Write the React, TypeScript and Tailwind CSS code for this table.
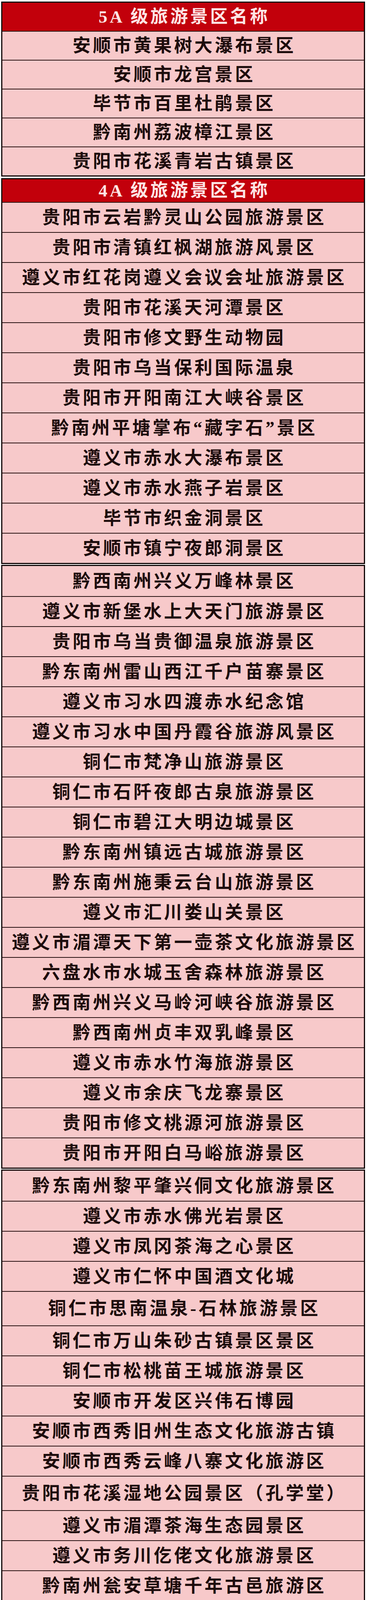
type Row = {
  name: string
  tall?: boolean
  size?: 'md' | 'sm'
}

const fiveA: Row[] = [
  { name: '安顺市黄果树大瀑布景区' },
  { name: '安顺市龙宫景区' },
  { name: '毕节市百里杜鹃景区' },
  { name: '黔南州荔波樟江景区' },
  { name: '贵阳市花溪青岩古镇景区' }
]

// 4A list is split in several stacked tables in the original picture
const fourAFirst: Row[] = [
  { name: '贵阳市云岩黔灵山公园旅游景区' },
  { name: '贵阳市清镇红枫湖旅游风景区' },
  { name: '遵义市红花岗遵义会议会址旅游景区' },
  { name: '贵阳市花溪天河潭景区' },
  { name: '贵阳市修文野生动物园' },
  { name: '贵阳市乌当保利国际温泉' },
  { name: '贵阳市开阳南江大峡谷景区' },
  { name: '黔南州平塘掌布“藏字石”景区' },
  { name: '遵义市赤水大瀑布景区' },
  { name: '遵义市赤水燕子岩景区' },
  { name: '毕节市织金洞景区' },
  { name: '安顺市镇宁夜郎洞景区' }
]

const fourAParts: Row[][] = [
  [
    { name: '黔西南州兴义万峰林景区' },
    { name: '遵义市新堡水上大天门旅游景区' },
    { name: '贵阳市乌当贵御温泉旅游景区' },
    { name: '黔东南州雷山西江千户苗寨景区' },
    { name: '遵义市习水四渡赤水纪念馆' },
    { name: '遵义市习水中国丹霞谷旅游风景区' },
    { name: '铜仁市梵净山旅游景区' },
    { name: '铜仁市石阡夜郎古泉旅游景区' },
    { name: '铜仁市碧江大明边城景区' },
    { name: '黔东南州镇远古城旅游景区' },
    { name: '黔东南州施秉云台山旅游景区' },
    { name: '遵义市汇川娄山关景区' },
    { name: '遵义市湄潭天下第一壶茶文化旅游景区' },
    { name: '六盘水市水城玉舍森林旅游景区' },
    { name: '黔西南州兴义马岭河峡谷旅游景区' },
    { name: '黔西南州贞丰双乳峰景区' },
    { name: '遵义市赤水竹海旅游景区' },
    { name: '遵义市余庆飞龙寨景区' },
    { name: '贵阳市修文桃源河旅游景区' },
    { name: '贵阳市开阳白马峪旅游景区' }
  ],
  [
    { name: '黔东南州黎平肇兴侗文化旅游景区' },
    { name: '遵义市赤水佛光岩景区' },
    { name: '遵义市凤冈茶海之心景区' },
    { name: '遵义市仁怀中国酒文化城' },
    { name: '铜仁市思南温泉-石林旅游景区', tall: true },
    { name: '铜仁市万山朱砂古镇景区景区' },
    { name: '铜仁市松桃苗王城旅游景区' },
    { name: '安顺市开发区兴伟石博园' },
    { name: '安顺市西秀旧州生态文化旅游古镇' },
    { name: '安顺市西秀云峰八寨文化旅游区' },
    { name: '贵阳市花溪湿地公园景区（孔学堂）', tall: true },
    { name: '遵义市湄潭茶海生态园景区' },
    { name: '遵义市务川仡佬文化旅游景区' },
    { name: '黔南州瓮安草塘千年古邑旅游区' },
    { name: '贵阳市息烽集中营革命历史纪念馆景区' },
    { name: '贵阳市白云蓬莱仙界·白云休闲农业旅游景区', size: 'sm' },
    { name: '贵阳市南明阿哈湖湿地公园景区' },
    { name: '铜仁市江口亚木沟生态旅游区' },
    { name: '安顺市紫云格凸河户外休闲旅游景区' },
    { name: '安顺市开发区贵州多彩万象旅游综合体' }
  ],
  [
    { name: '铜仁市石阡县佛顶山旅游景区' },
    { name: '铜仁市江口云舍旅游景区' },
    { name: '贵阳双龙多彩贵州城旅游综合体' },
    { name: '毕节市威宁草海生态旅游度假区' },
    { name: '黔东南州施秉杉木河景区' },
    { name: '贵阳市清镇时光贵州景区' },
    { name: '贵安新区车田景区' },
    { name: '安顺市平坝天龙屯堡旅游景区' },
    { name: '六盘水市盘县哒啦仙谷旅游景区' },
    { name: '六盘水市盘县妥乐古银杏旅游景区' },
    { name: '毕节市大方慕俄格古彝文化旅游景区' },
    { name: '遵义市赤水四洞沟旅游景区' },
    { name: '遵义市绥阳双河洞旅游景区' },
    { name: '遵义市仁怀茅台酒镇旅游景区' },
    { name: '黔东南州凯里云谷田园生态农业旅游综合体', size: 'md' },
    { name: '黔南州龙里中铁双龙镇巫山峡谷旅游景区', size: 'md' },
    { name: '黔南州福泉古城文化旅游景区' }
  ]
]

function NameRow({ row, first, short }: { row: Row; first?: boolean; short?: boolean }) {
  const height = short ? 'h-[74px]' : row.tall ? 'h-[88px]' : 'h-[77px]'
  const text =
    row.size === 'sm'
      ? 'text-[38px] tracking-[5px] pl-[5px]'
      : row.size === 'md'
        ? 'text-[44px] tracking-[4px] pl-[4px]'
        : 'text-[46px] tracking-[6px] pl-[6px]'

  return (
    <div
      className={`${height} ${first ? '' : 'border-t-2 border-[#2a1414]'} flex items-center justify-center bg-[#f7c9ca]`}
    >
      <span className={`${text} font-bold leading-none whitespace-nowrap text-[#1d0c0c]`}>{row.name}</span>
    </div>
  )
}

function Header({ label, tall }: { label: string; tall?: boolean }) {
  return (
    <div className={`${tall ? 'h-[72px]' : 'h-[58px]'} flex items-center justify-center bg-[#c2000b]`}>
      <span className="text-[45px] tracking-[6px] pl-[6px] font-bold leading-none whitespace-nowrap text-[#fde4e4]">
        {label}
      </span>
    </div>
  )
}

export default function App() {
  return (
    <main className="w-[940px] bg-white pt-[4px] pb-[5px] font-['Liberation_Serif','Noto_Sans_CJK_SC',serif]">
      <div className="ml-[3px] w-[932px] flex flex-col">
        <section className="border-[3px] border-[#120808]">
          <Header label="5A 级旅游景区名称" tall />
          {fiveA.map((row, i) => (
            <NameRow key={i} row={row} short />
          ))}
        </section>

        <section className="mt-[4px] border-[3px] border-[#120808]">
          <Header label="4A 级旅游景区名称" />
          {fourAFirst.map((row, i) => (
            <NameRow key={i} row={row} />
          ))}
        </section>

        {fourAParts.map((part, idx) => (
          <section key={idx} className="mt-[2px] border-[3px] border-[#120808]">
            {part.map((row, i) => (
              <NameRow key={i} row={row} first={i === 0} />
            ))}
          </section>
        ))}
      </div>
    </main>
  )
}
